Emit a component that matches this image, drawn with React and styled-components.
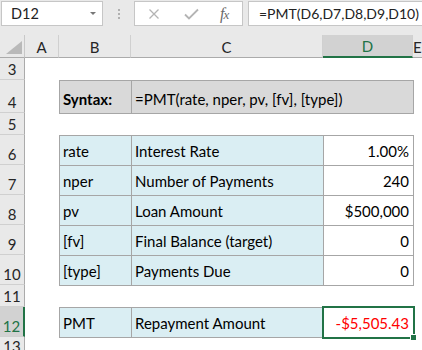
import React from 'react';
import styled, { createGlobalStyle } from 'styled-components';

const GREEN = '#217346';

const Global = createGlobalStyle`
  body {
    margin: 0;
    background: #fff;
    font-family: Lato, "Liberation Sans", sans-serif;
  }
`;

const Window = styled.div`
  width: 422px;
  height: 350px;
  overflow: hidden;
  display: flex;
  flex-direction: column;
`;

/* ---------- formula bar ---------- */

const Bar = styled.div`
  height: 35px;
  flex: none;
  display: flex;
  align-items: flex-start;
  padding: 1px 0 0 1px;
  box-sizing: border-box;
  background: #e9e9e9;
`;

const Box = styled.div`
  height: 25px;
  box-sizing: border-box;
  background: #fff;
  border: 1px solid #c6c6c6;
  display: flex;
  align-items: center;
  font-size: 14.5px;
  color: #222;
`;

const NameBox = styled(Box)`
  width: 102px;
  padding: 0 6px 0 9px;
  justify-content: space-between;
`;

const Caret = styled.span`
  width: 0;
  height: 0;
  border-left: 3px solid transparent;
  border-right: 3px solid transparent;
  border-top: 3px solid #777;
`;

const Grip = styled.div`
  width: 31px;
  height: 25px;
  display: flex;
  flex-direction: column;
  align-items: center;
  justify-content: center;
  gap: 2px;
  > i {
    width: 2px;
    height: 2px;
    background: #b0b0b0;
  }
`;

const ButtonsBox = styled(Box)`
  width: 109px;
  padding: 0 0 0 13px;
`;

const IconSlot = styled.span`
  display: flex;
  align-items: center;
  margin-left: ${p => p.gap || 0}px;
`;

const Fx = styled.span`
  font-family: "Liberation Serif", serif;
  font-style: italic;
  font-size: 16px;
  color: #6a6a6a;
  letter-spacing: -1px;
  > small {
    font-size: 13px;
  }
`;

const FormulaBox = styled(Box)`
  flex: 1;
  margin-left: 5px;
  border-right: none;
  padding-left: 10px;
  white-space: nowrap;
  font-size: 14px;
`;

const CrossIcon = () => (
  <svg width="12" height="12" viewBox="0 0 12 12">
    <path d="M1.5 1.5 L10.5 10.5 M10.5 1.5 L1.5 10.5" stroke="#b4b4b4" strokeWidth="1.3" fill="none" />
  </svg>
);

const CheckIcon = () => (
  <svg width="15" height="12" viewBox="0 0 15 12">
    <path d="M1 6.5 L5 10.5 L14 1.5" stroke="#b4b4b4" strokeWidth="1.8" fill="none" />
  </svg>
);

/* ---------- sheet ---------- */

const Sheet = styled.div`
  flex: 1;
  display: grid;
  grid-template-columns: 25px 34px 72px 192px 90px 1fr;
  grid-template-rows: 23px 22px 33px 22px repeat(5, 30px) 22px 30px 1fr;
  font-size: 15px;
  color: #000;
`;

const Corner = styled.div`
  background: #e9e9e9;
  border-right: 1px solid #c8c8c8;
  border-bottom: 1px solid #ababab;
  position: relative;
  &::after {
    content: '';
    position: absolute;
    right: 2px;
    bottom: 3px;
    width: 0;
    height: 0;
    border-left: 16px solid transparent;
    border-bottom: 13px solid #b9b9b9;
  }
`;

const ColHeader = styled.div`
  background: ${p => (p.selected ? '#d2d2d2' : '#e9e9e9')};
  color: ${p => (p.selected ? GREEN : '#262626')};
  border-right: 1px solid #d0d0d0;
  border-bottom: ${p => (p.selected ? `2px solid ${GREEN}` : '1px solid #ababab')};
  display: flex;
  align-items: center;
  justify-content: center;
  padding-top: 1px;
  font-size: 15px;
`;

const RowHeader = styled.div`
  background: ${p => (p.selected ? '#d2d2d2' : '#e9e9e9')};
  color: ${p => (p.selected ? GREEN : '#262626')};
  border-bottom: 1px solid #d0d0d0;
  border-right: ${p => (p.selected ? `2px solid ${GREEN}` : '1px solid #ababab')};
  display: flex;
  align-items: flex-end;
  justify-content: center;
  line-height: 18px;
  padding-bottom: 1px;
  font-size: 15px;
`;

const fills = { gray: '#d9d9d9', blue: '#daeef3', white: '#fff' };

const Cell = styled.div`
  position: relative;
  grid-column: span ${p => p.span || 1};
  background: ${p => (p.fill ? fills[p.fill] : 'transparent')};
  border: ${p => (p.fill ? '1px solid #a6a6a6' : 'none')};
  margin: 0 -1px -1px 0;
  display: flex;
  align-items: flex-end;
  justify-content: ${p => (p.right ? 'flex-end' : 'flex-start')};
  padding: 0 4px 5px 3px;
  line-height: 18px;
  white-space: nowrap;
  font-weight: ${p => (p.bold ? 700 : 400)};
  color: ${p => p.color || '#000'};
  z-index: ${p => (p.fill ? 1 : 0)};
`;

const Selection = styled.div`
  position: absolute;
  inset: -2px -2px -2px -2px;
  border: 2px solid ${GREEN};
  pointer-events: none;
  &::after {
    content: '';
    position: absolute;
    right: -4px;
    bottom: -4px;
    width: 5px;
    height: 5px;
    background: ${GREEN};
    border: 1px solid #fff;
  }
`;

const cols = ['A', 'B', 'C', 'D', 'E'];

const table = [
  { n: 3 },
  {
    n: 4,
    cells: [
      { text: 'Syntax:', fill: 'gray', bold: true },
      { text: '=PMT(rate, nper, pv, [fv], [type])', fill: 'gray', span: 2 },
    ],
  },
  { n: 5 },
  { n: 6, cells: [{ text: 'rate', fill: 'blue' }, { text: 'Interest Rate', fill: 'blue' }, { text: '1.00%', fill: 'white', right: true }] },
  { n: 7, cells: [{ text: 'nper', fill: 'blue' }, { text: 'Number of Payments', fill: 'blue' }, { text: '240', fill: 'white', right: true }] },
  { n: 8, cells: [{ text: 'pv', fill: 'blue' }, { text: 'Loan Amount', fill: 'blue' }, { text: '$500,000', fill: 'white', right: true }] },
  { n: 9, cells: [{ text: '[fv]', fill: 'blue' }, { text: 'Final Balance (target)', fill: 'blue' }, { text: '0', fill: 'white', right: true }] },
  { n: 10, cells: [{ text: '[type]', fill: 'blue' }, { text: 'Payments Due', fill: 'blue' }, { text: '0', fill: 'white', right: true }] },
  { n: 11 },
  {
    n: 12,
    selected: true,
    cells: [
      { text: 'PMT', fill: 'blue' },
      { text: 'Repayment Amount', fill: 'blue' },
      { text: '-$5,505.43', fill: 'white', right: true, color: '#ff0000', active: true },
    ],
  },
  { n: 13 },
];

function Row({ row }) {
  const cells = row.cells || [];
  let used = cells.reduce((s, c) => s + (c.span || 1), 0);
  return (
    <>
      <RowHeader selected={row.selected}>{row.n}</RowHeader>
      <Cell />
      {cells.map((c, i) => (
        <Cell key={i} fill={c.fill} span={c.span} right={c.right} bold={c.bold} color={c.color}>
          {c.text}
          {c.active && <Selection />}
        </Cell>
      ))}
      {Array.from({ length: 4 - used }).map((_, i) => (
        <Cell key={'e' + i} />
      ))}
    </>
  );
}

export default function App() {
  return (
    <Window>
      <Global />
      <Bar>
        <NameBox>
          D12
          <Caret />
        </NameBox>
        <Grip>
          <i />
          <i />
          <i />
        </Grip>
        <ButtonsBox>
          <IconSlot>
            <CrossIcon />
          </IconSlot>
          <IconSlot gap={24}>
            <CheckIcon />
          </IconSlot>
          <IconSlot gap={21}>
            <Fx>
              f<small>x</small>
            </Fx>
          </IconSlot>
        </ButtonsBox>
        <FormulaBox>=PMT(D6,D7,D8,D9,D10)</FormulaBox>
      </Bar>
      <Sheet>
        <Corner />
        {cols.map(c => (
          <ColHeader key={c} selected={c === 'D'}>
            {c}
          </ColHeader>
        ))}
        {table.map(r => (
          <Row key={r.n} row={r} />
        ))}
      </Sheet>
    </Window>
  );
}
